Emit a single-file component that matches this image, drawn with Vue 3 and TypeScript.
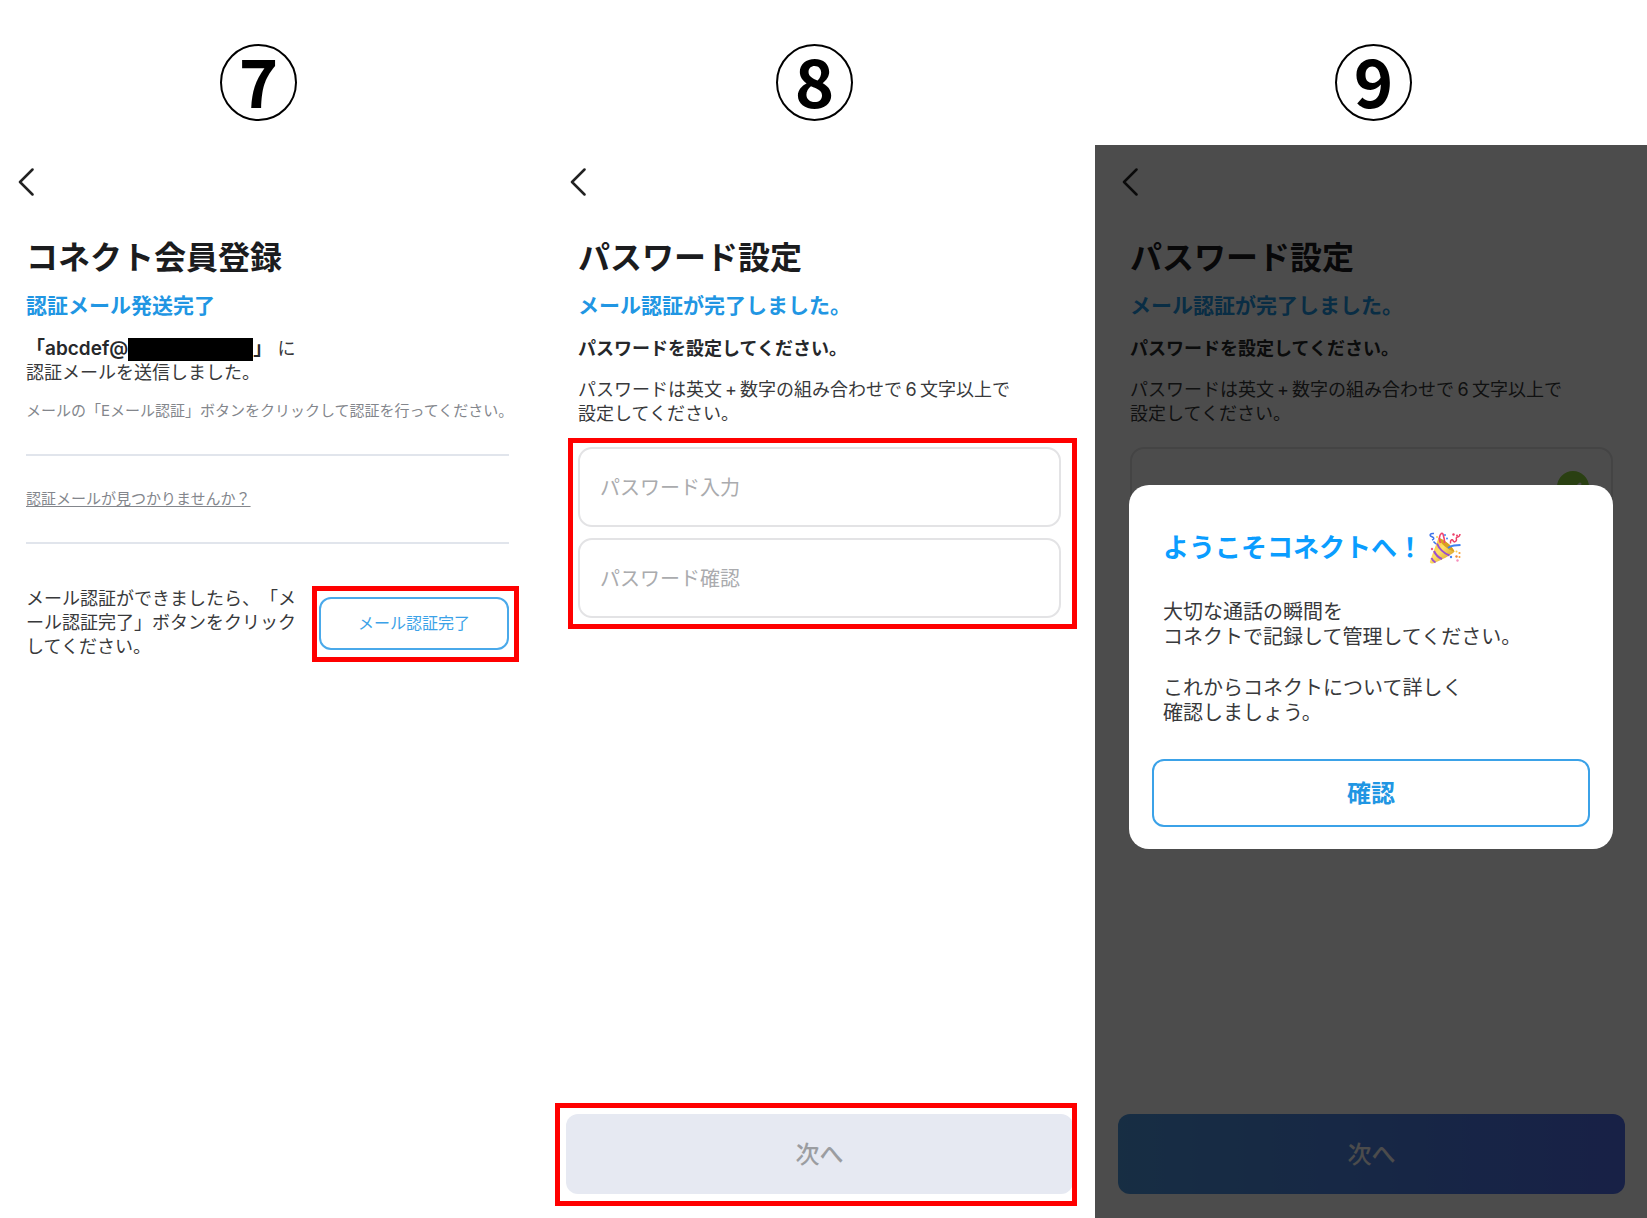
<script setup lang="ts">
import { ref } from 'vue'

interface PasswordScreen {
  id: string
  done: boolean
}

const steps: number[] = [7, 8, 9]
const passwordScreens: PasswordScreen[] = [
  { id: 'input', done: false },
  { id: 'welcome', done: true },
]
const welcomeOpen = ref<boolean>(true)
</script>

<template>
  <div class="page">
    <header class="steps">
      <div v-for="step in steps" :key="step" class="step-cell">
        <span class="step">{{ step }}</span>
      </div>
    </header>

    <main class="screens">
      <section class="screen first">
        <button class="back" type="button" aria-label="戻る">
          <svg viewBox="0 0 16 28" width="16" height="28"><path d="M14.5 1.5 2 14l12.500 12.500" /></svg>
        </button>
        <h1 class="title">コネクト会員登録</h1>
        <h2 class="subtitle">認証メール発送完了</h2>
        <p class="text lead">
          <strong class="address">「abcdef@<span class="redacted"></span>」</strong> に<br>認証メールを送信しました。
        </p>
        <p class="note">メールの「Eメール認証」ボタンをクリックして認証を行ってください。</p>
        <hr class="rule">
        <p class="help"><a class="help-link" href="#">認証メールが見つかりませんか？</a></p>
        <hr class="rule">
        <div class="confirm-row">
          <p class="text confirm-text">メール認証ができましたら、「メール認証完了」ボタンをクリックしてください。</p>
          <div class="marked mark-verify">
            <button class="verify" type="button">メール認証完了</button>
          </div>
        </div>
      </section>

      <section v-for="s in passwordScreens" :key="s.id" class="screen">
        <button class="back" type="button" aria-label="戻る">
          <svg viewBox="0 0 16 28" width="16" height="28"><path d="M14.5 1.5 2 14l12.500 12.500" /></svg>
        </button>
        <h1 class="title">パスワード設定</h1>
        <h2 class="subtitle">メール認証が完了しました。</h2>
        <p class="text lead"><strong>パスワードを設定してください。</strong></p>
        <p class="text rule-text">
          パスワードは英文<span class="cell">+</span>数字の組み合わせで<span class="cell">6</span>文字以上で<br>設定してください。
        </p>
        <div class="fields" :class="{ marked: !s.done, 'mark-fields': !s.done }">
          <div class="field">
            <input class="field-input" type="password" aria-label="パスワード入力" :placeholder="s.done ? '' : 'パスワード入力'">
            <svg v-if="s.done" class="ok" viewBox="0 0 32 32" width="32" height="32">
              <circle cx="16" cy="16" r="16" fill="#8cd53c" />
              <path d="m9 17 5 5 9-9" fill="none" stroke="#fff" stroke-width="3" stroke-linecap="round" stroke-linejoin="round" />
            </svg>
          </div>
          <div class="field">
            <input class="field-input" type="password" aria-label="パスワード確認" :placeholder="s.done ? '' : 'パスワード確認'">
          </div>
        </div>
        <div class="bottom" :class="{ marked: !s.done, 'mark-next': !s.done }">
          <button class="next" :class="{ ready: s.done }" type="button">次へ</button>
        </div>

        <div v-if="s.done && welcomeOpen" class="overlay">
          <div class="dialog" role="dialog" aria-modal="true" aria-labelledby="welcome-title">
            <h2 id="welcome-title" class="dialog-title">
              <span>ようこそコネクトへ！</span>
              <svg class="popper" viewBox="0 0 32 32" width="32" height="32" aria-hidden="true">
                <defs>
                  <linearGradient id="cone" x1="0" y1="0" x2="1" y2="1">
                    <stop offset="0" stop-color="#f3b52e" />
                    <stop offset=".45" stop-color="#ffe066" />
                    <stop offset="1" stop-color="#c98a12" />
                  </linearGradient>
                </defs>
                <path d="M9.500 6C14 7 23 14 25.500 19.500 24 22 9 30 3.500 31.500 1.500 32 .5 30.500 1 29Z" fill="url(#cone)" />
                <path d="M9.500 6C11 11 19 18.500 25.500 19.500 23 13.500 15 7 9.500 6Z" fill="#d9a01f" />
                <path d="M8 11.500C10 16.500 14.500 21 20.500 23.500M5 19c1.500 3.500 4.500 6.500 8 8M2.500 26c.8 2 2.200 3.500 4 4.500" fill="none" stroke="#9a4fd0" stroke-width="2" />
                <path d="M11.500 11c-2-4-1-8 .8-9.500 1.800-1 2 2 2.700 4.500.6 2 .5 3.500.5 5" fill="none" stroke="#f0436f" stroke-width="1.600" />
                <path d="M19 16c3-3 7-2.500 12.500-3" fill="none" stroke="#3f82f0" stroke-width="2" />
                <path d="M5 1.500C1 1 0 3.500 2.500 4.500S6 7 3 8M4.500 9.500 7 12" fill="none" stroke="#3f74ea" stroke-width="1.500" />
                <path d="M21.500 11.500c-.5-4 2-4.500 2.500-3s1.500 2 3 .5c1.500-2-.5-2.500.5-3.500s3 .5 3.500-3.500" fill="none" stroke="#ec3f68" stroke-width="1.500" />
                <circle cx="16" cy="3" r="1" fill="#4285f4" />
                <circle cx="8" cy="5" r="1" fill="#ffd34f" />
                <circle cx="18" cy="6.500" r="1" fill="#4285f4" />
                <circle cx="24.500" cy="2.500" r="1.200" fill="#ec3f68" />
                <circle cx="28" cy="3.500" r="1" fill="#ec3f68" />
                <circle cx="3" cy="17" r="1.200" fill="#ec5a84" />
                <circle cx="27.500" cy="19.500" r="1" fill="#ffd34f" />
                <circle cx="30.500" cy="21" r="1.100" fill="#f6a037" />
                <circle cx="22" cy="25" r="1.200" fill="#4285f4" />
                <circle cx="27.500" cy="24.500" r="1.200" fill="#f08a3c" />
                <circle cx="30.500" cy="25" r="1" fill="#f6a037" />
                <circle cx="28.500" cy="28.500" r="1.200" fill="#f58fbc" />
              </svg>
            </h2>
            <p class="dialog-text">大切な通話の瞬間を<br>コネクトで記録して管理してください。</p>
            <p class="dialog-text">これからコネクトについて詳しく<br>確認しましょう。</p>
            <button class="dialog-button" type="button" @click="welcomeOpen = false">確認</button>
          </div>
        </div>
      </section>
    </main>
  </div>
</template>

<style>
body {
  margin: 0;
  background: #fff;
}
</style>

<style scoped>
.page {
  display: flex;
  flex-direction: column;
  min-height: 100vh;
  font-family: Inter, "Noto Sans CJK JP", sans-serif;
  color: #38393b;
  text-spacing-trim: space-all;
}

.page,
.page *,
.page *::after {
  box-sizing: border-box;
}

h1,
h2,
p {
  margin: 0;
}

button,
input {
  font-family: inherit;
}

button {
  cursor: pointer;
}

.steps {
  display: grid;
  grid-template-columns: 517fr 595fr 523fr;
  padding: 44px 12px 24px 0;
}

.step-cell {
  display: flex;
  justify-content: center;
}

.step {
  display: flex;
  align-items: center;
  justify-content: center;
  width: 77px;
  height: 77px;
  padding-bottom: 8px;
  border: 2px solid #000;
  border-radius: 50%;
  color: #000;
  font-family: "Noto Sans CJK JP", sans-serif;
  font-size: 67px;
  font-weight: 700;
  line-height: 67px;
}

.screens {
  flex: 1;
  display: grid;
  grid-template-columns: minmax(0, 543fr) minmax(0, 552fr) minmax(0, 552fr);
}

.screen {
  position: relative;
  display: flex;
  flex-direction: column;
  padding: 23px 34px 24px 35px;
}

.screen.first {
  padding-left: 26px;
}

.back {
  display: block;
  align-self: flex-start;
  width: 16px;
  height: 28px;
  margin: 0 0 0 -8px;
  padding: 0;
  border: 0;
  background: none;
}

.back svg {
  display: block;
  fill: none;
  stroke: #222;
  stroke-width: 2.500;
  stroke-linecap: round;
  stroke-linejoin: round;
}

.title {
  margin-top: 42px;
  color: #1b1c1e;
  font-size: 32px;
  font-weight: 700;
  line-height: 40px;
}

.subtitle {
  margin-top: 14px;
  color: #2196e3;
  font-size: 21px;
  font-weight: 700;
  line-height: 28px;
}

.text {
  font-size: 18px;
  line-height: 24px;
  line-break: anywhere;
}

.lead {
  margin-top: 17px;
}

.text strong {
  color: #26282b;
  font-weight: 700;
}

.text .address {
  font-size: 19px;
  font-weight: 600;
}

.redacted {
  display: inline-block;
  width: 125px;
  height: 23px;
  background: #000;
  vertical-align: middle;
}

.note,
.help {
  font-size: 15px;
  line-height: 24px;
  color: #83868c;
}

.note {
  margin-top: 14px;
  white-space: nowrap;
}

.help-link {
  color: inherit;
  text-decoration: underline;
  text-underline-offset: 2px;
}

.rule {
  width: 100%;
  height: 2px;
  margin: 31px 0;
  border: 0;
  background: #e1e5ec;
}

.confirm-row {
  display: flex;
  align-items: center;
  gap: 17px;
  margin-top: 12px;
}

.confirm-text {
  flex: 1;
}

.verify {
  width: 190px;
  height: 53px;
  padding: 0 0 2px;
  border: 2px solid #4aa9ea;
  border-radius: 12px;
  background: #fff;
  color: #3ba2e8;
  font-size: 16px;
}

.marked {
  position: relative;
}

.marked::after {
  content: "";
  position: absolute;
  border: 5px solid #f00;
  pointer-events: none;
}

.mark-verify::after {
  inset: -11px -10px -12px -7px;
}

.mark-fields::after {
  inset: -9px -16px -11px -10px;
}

.mark-next::after {
  inset: -11px -4px -12px -11px;
}

.rule-text {
  margin-top: 17px;
}

.cell {
  display: inline-block;
  width: 1em;
  text-align: center;
}

.fields {
  display: flex;
  flex-direction: column;
  gap: 11px;
  margin-top: 21px;
}

.field {
  position: relative;
}

.field-input {
  display: block;
  width: 100%;
  height: 80px;
  padding: 2px 20px 0;
  border: 2px solid #e3e3e5;
  border-radius: 14px;
  background: #fff;
  color: #333;
  font-size: 20px;
}

.field-input::placeholder {
  color: #aaabae;
  opacity: 1;
}

.ok {
  position: absolute;
  top: 24px;
  right: 24px;
}

.bottom {
  margin: auto -12px 0;
}

.next {
  display: block;
  width: 100%;
  height: 80px;
  padding: 0 0 4px;
  border: 0;
  border-radius: 12px;
  background: #e6e9f2;
  color: #9b9da1;
  font-size: 24px;
  font-weight: 500;
}

.next.ready {
  background: linear-gradient(90deg, #4d99e2, #506eec);
  color: #fff;
}

.overlay {
  position: absolute;
  inset: 0;
  padding: 340px 34px 0;
  background: rgba(0, 0, 0, 0.7);
}

.dialog {
  display: flex;
  flex-direction: column;
  padding: 43px 23px 22px;
  border-radius: 20px;
  background: #fff;
}

.dialog-title {
  display: flex;
  align-items: center;
  margin: 0 11px 32px;
  color: #0a9dff;
  font-size: 26px;
  font-weight: 700;
  line-height: 40px;
}

.popper {
  margin-left: 6px;
}

.dialog-text {
  margin: 0 11px 26px;
  font-size: 20px;
  line-height: 25px;
}

.dialog-button {
  height: 68px;
  margin-top: 7px;
  padding: 0 0 4px;
  border: 2px solid #3ba2e8;
  border-radius: 12px;
  background: #fff;
  color: #2196e3;
  font-size: 24px;
  font-weight: 700;
}
</style>
